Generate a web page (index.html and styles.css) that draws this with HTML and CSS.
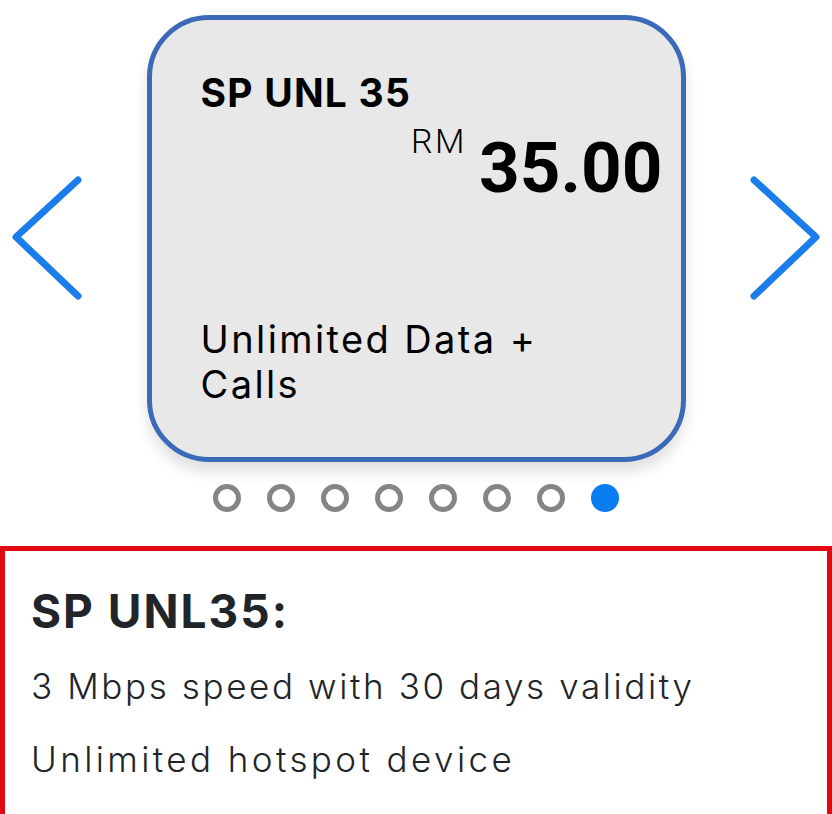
FILE: index.html
```html
<!DOCTYPE html>
<html lang="en">
	<head>
		<meta charset="utf-8">
		<title>SP UNL 35</title>
		<link rel="stylesheet" href="styles.css">
	</head>
	<body>
		<div class="carousel">
			<button class="nav-button" type="button" aria-label="Previous">
				<svg width="72" height="130" viewBox="0 0 72 130"><polyline points="68,6 6,63 68,122"/></svg>
			</button>
			<div class="plan-card">
				<p class="plan-name">SP UNL 35</p>
				<p class="plan-price"><span class="currency">RM</span><span class="amount">35.00</span></p>
				<p class="plan-desc">Unlimited Data + Calls</p>
			</div>
			<button class="nav-button" type="button" aria-label="Next">
				<svg width="72" height="130" viewBox="0 0 72 130"><polyline points="4,6 66,63 4,122"/></svg>
			</button>
		</div>
		<div class="dots">
			<span class="dot"></span>
			<span class="dot"></span>
			<span class="dot"></span>
			<span class="dot"></span>
			<span class="dot"></span>
			<span class="dot"></span>
			<span class="dot"></span>
			<span class="dot active"></span>
		</div>
		<div class="details">
			<h2 class="details-title">SP UNL35:</h2>
			<p class="details-line">3 Mbps speed with 30 days validity</p>
			<p class="details-line">Unlimited hotspot device</p>
		</div>
	</body>
</html>
```

FILE: styles.css
```css
* {
	box-sizing:border-box}
body {
	background-color:#ffffff;
	font-family:Inter, "Noto Sans", sans-serif;
	margin:0}
p, h2 {
	margin:0}
.carousel {
	align-items:center;
	display:flex;
	justify-content:space-between;
	padding:15px 10px 0}
.nav-button {
	background:none;
	border:none;
	cursor:pointer;
	padding:0}
.nav-button svg {
	display:block;
	fill:none;
	stroke:#1a7de9;
	stroke-linecap:round;
	stroke-linejoin:round;
	stroke-width:7}
.plan-card {
	background-color:#e8e8e8;
	border:5px solid #3b6bb8;
	border-radius:62px;
	box-shadow:0 10px 14px rgba(0,0,0,0.12);
	color:#000000;
	height:447px;
	padding:0 18px 0 49px;
	width:539px}
.plan-name {
	font-size:39px;
	font-weight:700;
	letter-spacing:1.2px;
	line-height:44px;
	margin-top:51px}
.plan-price {
	line-height:74px;
	margin-top:-11px;
	text-align:right}
.currency {
	font-family:Roboto, sans-serif;
	font-size:34px;
	font-weight:300;
	letter-spacing:2.5px;
	margin-right:12px;
	vertical-align:39px}
.amount {
	font-family:Roboto, sans-serif;
	font-size:71px;
	font-weight:700}
.plan-desc {
	font-size:38px;
	letter-spacing:2.4px;
	line-height:45px;
	margin-top:94px;
	max-width:380px}
.dots {
	display:flex;
	gap:26px;
	justify-content:center;
	margin-top:22px}
.dot {
	border:5px solid #858585;
	border-radius:50%;
	height:28px;
	width:28px}
.dot.active {
	background-color:#0a7cf2;
	border-color:#0a7cf2}
.details {
	border:5px solid #e10a12;
	color:#212529;
	margin-top:34px;
	min-height:300px;
	padding:33px 26px 0}
.details-title {
	font-size:46px;
	font-weight:700;
	letter-spacing:2px;
	line-height:54px}
.details-line {
	font-size:35px;
	font-weight:300;
	letter-spacing:2.6px;
	line-height:40px;
	margin-top:28px}
.details-line + .details-line {
	letter-spacing:3.4px;
	margin-top:33px}
```
